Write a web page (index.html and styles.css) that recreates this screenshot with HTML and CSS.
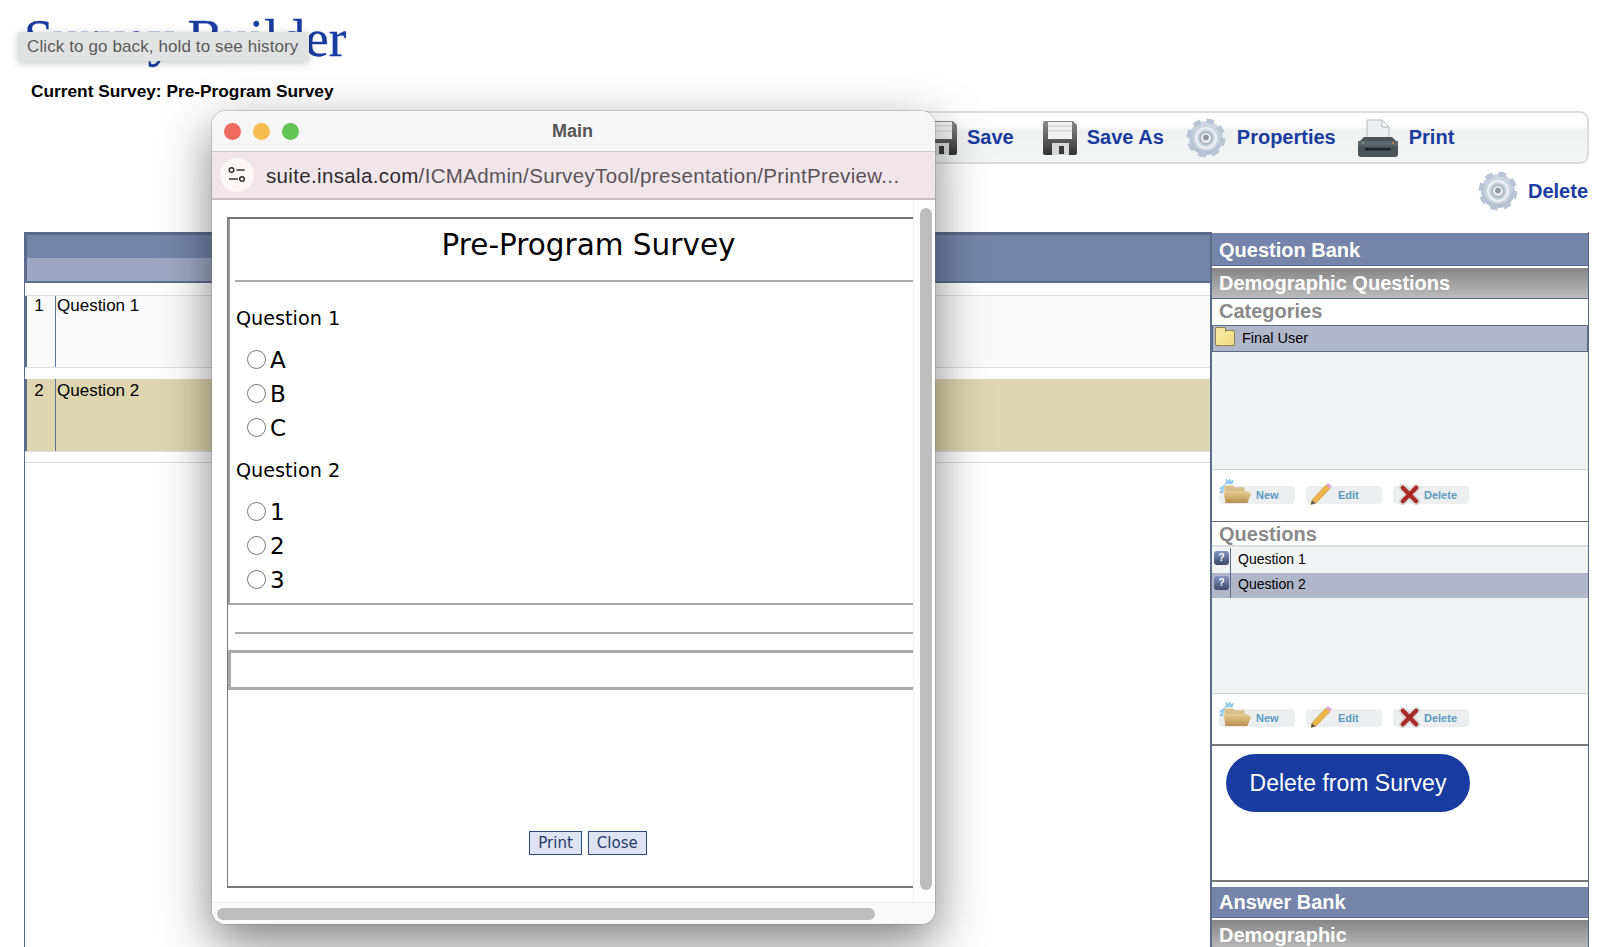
FILE: index.html
```html
<!DOCTYPE html>
<html lang="en">
<head>
<meta charset="utf-8">
<title>Survey Builder</title>
<link rel="stylesheet" href="styles.css">
</head>
<body>
<svg class="defs" width="0" height="0" aria-hidden="true">
  <defs>
    <linearGradient id="gearFill" x1="0" y1="0" x2="0" y2="1"><stop offset="0" stop-color="#d3d9e2"/><stop offset="1" stop-color="#aebbd2"/></linearGradient>
    <linearGradient id="floppyFill" x1="0" y1="0" x2="0" y2="1"><stop offset="0" stop-color="#8a8a8a"/><stop offset="1" stop-color="#333"/></linearGradient>
    <linearGradient id="tanFill" x1="0" y1="0" x2="0" y2="1"><stop offset="0" stop-color="#e8cf95"/><stop offset="1" stop-color="#b98f4e"/></linearGradient>
    <symbol id="gear" viewBox="0 0 40 40">
      <circle cx="20" cy="20" r="17" fill="url(#gearFill)" stroke="#b9c4d6" stroke-width="5" stroke-dasharray="7.500 5.850"/>
      <circle cx="20" cy="20" r="13" fill="#cdd5e0"/>
      <circle cx="20" cy="20" r="10" fill="none" stroke="#eef1f5" stroke-width="2"/>
      <circle cx="20" cy="20" r="6" fill="#e6e9ee" stroke="#a7acb3" stroke-width="1.500"/>
      <circle cx="20" cy="19.500" r="2.800" fill="#8f959d"/>
    </symbol>
    <symbol id="floppy" viewBox="0 0 36 36">
      <path d="M1 3a2 2 0 0 1 2-2h28l4 4v28a2 2 0 0 1-2 2H3a2 2 0 0 1-2-2z" fill="url(#floppyFill)"/>
      <rect x="6" y="2" width="24" height="17" fill="#f1f1f1"/>
      <rect x="6" y="5" width="24" height="1.500" fill="#d8d8d8"/>
      <rect x="6" y="10" width="24" height="1.500" fill="#d8d8d8"/>
      <rect x="10" y="23" width="17" height="12" fill="#d8d8d8"/>
      <rect x="17" y="26" width="5" height="8" fill="#3a3a3a"/>
    </symbol>
    <symbol id="printer" viewBox="0 0 40 40">
      <path d="M9 2h15l7 7v14H9z" fill="#eceef0" stroke="#b5bbc0"/>
      <path d="M24 2v7h7z" fill="#fff" stroke="#b5bbc0"/>
      <path d="M6 19h28l6 6v11a3 3 0 0 1-3 3H3a3 3 0 0 1-3-3V25z" fill="#4a5358"/>
      <rect x="0" y="23" width="40" height="5" fill="#5d666b"/>
      <rect x="7" y="30" width="26" height="2.500" fill="#1f2427"/>
      <circle cx="5" cy="25" r="1" fill="#5fb37a"/>
      <circle cx="35" cy="25" r="1" fill="#d98a3c"/>
    </symbol>
    <symbol id="folderNew" viewBox="0 0 36 28">
      <path d="M8 1l1.500 3 2.500-3 .5 3.500 3-2-1 3.500H8L3 10l-2 1 3 2-3 2.500 3.500.5" fill="#9fd0f0" stroke="#7fbfea" stroke-width="1"/>
      <path d="M6 8h9l2 2h11v5H6z" fill="#d7bf8a"/>
      <path d="M7 27l-2-13h25l5 3-4 10z" fill="url(#tanFill)"/>
    </symbol>
    <symbol id="pencil" viewBox="0 0 24 24">
      <path d="M3 19L17 4l4 3.500L7 22l-5 1.500z" fill="#eeb64a" stroke="#c99a3c" stroke-width=".7"/>
      <path d="M17 4l2-2 4 3.500-2 2z" fill="#e3a8d8"/>
      <path d="M2 23.500l1-4 3.500 2.800z" fill="#555"/>
    </symbol>
    <symbol id="cross" viewBox="0 0 22 22">
      <path d="M4 4l14 14M18 4L4 18" stroke="#d9d9d9" stroke-width="8" stroke-linecap="round"/>
      <path d="M4 4l14 14M18 4L4 18" stroke="#a92a26" stroke-width="4.500" stroke-linecap="round"/>
    </symbol>
  </defs>
</svg>

<div class="page">
  <header class="head">
    <h1 class="head-title">Survey Builder</h1>
    <p class="head-current">Current Survey: Pre-Program Survey</p>
  </header>

  <nav class="toolbar">
    <a class="tool tool-save"><svg class="ico ico-floppy"><use href="#floppy"/></svg>Save</a>
    <a class="tool tool-saveas"><svg class="ico ico-floppy"><use href="#floppy"/></svg>Save As</a>
    <a class="tool tool-props"><svg class="ico ico-gear"><use href="#gear"/></svg>Properties</a>
    <a class="tool tool-print"><svg class="ico ico-gear"><use href="#printer"/></svg>Print</a>
  </nav>
  <div class="subtools">
    <a class="tool tool-delete"><svg class="ico ico-gear"><use href="#gear"/></svg>Delete</a>
  </div>

  <main class="work">
    <section class="sheet">
      <div class="sheet-head"><div class="sheet-subhead"></div></div>
      <div class="q-row q-row-first"><span class="q-num">1</span><span class="q-text">Question 1</span></div>
      <div class="q-row q-row-active"><span class="q-num">2</span><span class="q-text">Question 2</span></div>
      <div class="sheet-rest"></div>
    </section>

    <aside class="bank">
      <h2 class="bank-head">Question Bank</h2>
      <h3 class="bank-sub">Demographic Questions</h3>
      <h4 class="bank-label">Categories</h4>
      <div class="list list-cat">
        <div class="cat-row"><span class="folder"></span>Final User</div>
      </div>
      <div class="mini-bar">
        <a class="mini mini-n"><svg class="mini-new"><use href="#folderNew"/></svg><span class="mini-label">New</span></a>
        <a class="mini mini-e"><svg class="mini-edit"><use href="#pencil"/></svg><span class="mini-label">Edit</span></a>
        <a class="mini mini-d"><svg class="mini-del"><use href="#cross"/></svg><span class="mini-label">Delete</span></a>
      </div>
      <h4 class="bank-label bank-label-q">Questions</h4>
      <div class="list list-q">
        <div class="item"><span class="item-icon"><span class="qmark">?</span></span><span class="item-text">Question 1</span></div>
        <div class="item item-active"><span class="item-icon"><span class="qmark">?</span></span><span class="item-text">Question 2</span></div>
      </div>
      <div class="mini-bar mini-bar-last">
        <a class="mini mini-n"><svg class="mini-new"><use href="#folderNew"/></svg><span class="mini-label">New</span></a>
        <a class="mini mini-e"><svg class="mini-edit"><use href="#pencil"/></svg><span class="mini-label">Edit</span></a>
        <a class="mini mini-d"><svg class="mini-del"><use href="#cross"/></svg><span class="mini-label">Delete</span></a>
      </div>
      <div class="action">
        <button class="action-btn" type="button">Delete from Survey</button>
      </div>
      <h2 class="bank-head bank-head-answer">Answer Bank</h2>
      <h3 class="bank-sub">Demographic</h3>
    </aside>
  </main>
</div>

<div class="tooltip">Click to go back, hold to see history</div>

<div class="window">
  <div class="win-title">
    <span class="light light-red"></span><span class="light light-yellow"></span><span class="light light-green"></span>
    <span class="win-name">Main</span>
  </div>
  <div class="win-url">
    <span class="url-badge">
      <svg width="20" height="20" viewBox="0 0 20 20" fill="none" stroke="#333" stroke-width="1.500">
        <circle cx="4.500" cy="5" r="2.300"/><path d="M9.500 5h8"/>
        <circle cx="15" cy="14" r="2.300"/><path d="M2 14h9"/>
      </svg>
    </span>
    <span class="url-text"><b class="url-host">suite.insala.com</b>/ICMAdmin/SurveyTool/presentation/PrintPreview...</span>
  </div>
  <div class="win-body">
    <div class="view">
      <div class="doc">
        <div class="doc-main">
          <div class="doc-title">Pre-Program Survey</div>
          <div class="doc-q">Question 1</div>
          <label class="opt"><input class="radio" type="radio" name="q1"><span class="opt-text">A</span></label>
          <label class="opt"><input class="radio" type="radio" name="q1"><span class="opt-text">B</span></label>
          <label class="opt"><input class="radio" type="radio" name="q1"><span class="opt-text">C</span></label>
          <div class="doc-q doc-q-next">Question 2</div>
          <label class="opt"><input class="radio" type="radio" name="q2"><span class="opt-text">1</span></label>
          <label class="opt"><input class="radio" type="radio" name="q2"><span class="opt-text">2</span></label>
          <label class="opt"><input class="radio" type="radio" name="q2"><span class="opt-text">3</span></label>
        </div>
        <hr class="doc-rule">
        <div class="doc-empty"></div>
        <div class="doc-btns">
          <button class="doc-btn" type="button">Print</button>
          <button class="doc-btn" type="button">Close</button>
        </div>
      </div>
    </div>
    <div class="vtrack"><div class="vthumb"></div></div>
    <div class="htrack"><div class="hthumb"></div></div>
  </div>
</div>
</body>
</html>
```
FILE: styles.css
```css
* { box-sizing: border-box; }
html, body { margin: 0; height: 100%; overflow: hidden; background: #fff; }
body { font-family: "Liberation Sans", Arial, sans-serif; color: #000; position: relative; }
.defs { position: absolute; }
.page { height: 947px; display: flex; flex-direction: column; padding: 0 11px 0 24px; }

/* header */
.head { height: 111px; flex: none; }
.head-title { margin: 0; padding-top: 6px; height: 81px; font: 400 53px/65px "Liberation Serif", serif; -webkit-text-stroke: .3px #183c9f; color: #183c9f; white-space: nowrap; }
.head-current { margin: 0; padding-left: 7px; font-weight: 700; font-size: 17.300px; line-height: 20px; }

/* toolbar */
.toolbar { flex: none; height: 53px; margin-left: 626px; padding-left: 270px; display: flex; align-items: center; border: 2px solid #dcdcdc; border-radius: 9px; background: linear-gradient(#fff 0, #fcfcfc 30%, #eff0f0 34%, #f4f5f5 100%); }
.tool { display: flex; align-items: center; font-weight: 700; font-size: 20px; color: #183c9f; white-space: nowrap; }
.ico { flex: none; filter: blur(.7px); }
.ico-floppy { width: 36px; height: 36px; }
.ico-gear { width: 40px; height: 40px; }
.tool-save .ico { margin-right: 9px; }
.tool-saveas { margin-left: 28px; }
.tool-saveas .ico { margin-right: 9px; }
.tool-props { margin-left: 22px; }
.tool-props .ico { margin-right: 11px; }
.tool-print { margin-left: 22px; }
.tool-print .ico { margin-right: 11px; }
.subtools { flex: none; height: 68px; display: flex; justify-content: flex-end; align-items: center; padding: 0 1px 14px 0; }
.tool-delete .ico { margin-right: 10px; }

/* main work area */
.work { flex: 1; min-height: 0; display: flex; }
.sheet { width: 1186px; flex: none; border-left: 1px solid #5b6b8a; }
.sheet-head { height: 51px; border-top: 3px solid #5b6b8a; border-left: 2px solid #5b6b8a; border-bottom: 2px solid #5b6b8a; background: #7485a9; }
.sheet-subhead { width: 400px; height: 23px; margin-top: 23px; background: #9da8c2; }
.q-row { height: 73px; margin-top: 11px; padding-top: 2px; display: flex; background: #fafafa; border-bottom: 1px solid #ddd; font-size: 17px; line-height: 20px; }
.q-row-first { margin-top: 12px; padding-top: 0; border-top: 1px solid #ddd; }
.q-row-active { background: #ded6b0; }
.q-num { width: 31px; margin-top: -2px; padding-top: 2px; text-align: center; flex: none; border-left: 2px solid #5b6b8a; border-right: 1px solid #5b7299; padding-right: 4px; }
.q-row-first .q-num { margin-top: 0; padding-top: 0; }
.q-text { padding-left: 1px; flex: 1; }
.sheet-rest { height: 0; margin-top: 10px; border-top: 1px solid #ddd; }

/* right bank */
.bank { width: 379px; flex: none; padding-top: 1px; border-left: 2px solid #5b6b8a; border-right: 1px solid #5b6b8a; display: flex; flex-direction: column; background: #fff; overflow: hidden; }
.bank-head { flex: none; margin: 0; height: 33px; padding-left: 7px; background: #7485a9; color: #fff; font-size: 20px; line-height: 34px; border-bottom: 1px solid #5b6b8a; }
.bank-sub { flex: none; margin: 2px 0 0; height: 31px; padding-left: 7px; background: linear-gradient(#858585, #bcbcbc); color: #fff; font-size: 20px; line-height: 31px; border-bottom: 1px solid #5b6b8a; }
.bank-label { flex: none; margin: 0; height: 24px; padding-left: 7px; color: #8a8a8a; font-size: 20px; line-height: 24px; }
.bank-label-q { height: 25px; border-bottom: 2px solid #ddd; }
.list { flex: none; background: #f2f3f4; border-bottom: 1px solid #ccc; }
.list-cat { margin-top: 2px; height: 145px; }
.list-q { height: 147px; padding-top: 1px; }
.cat-row { height: 27px; display: flex; align-items: center; background: #b1b6ca; border: 1.500px solid #5b6b8a; font-size: 14.500px; padding: 0 0 1px 2px; }
.folder { width: 20px; height: 16px; margin-right: 7px; background: linear-gradient(135deg, #f9ecaa, #eedc80); border: 1px solid #8d8450; border-radius: 2px; position: relative; }
.folder::before { content: ""; position: absolute; left: -1px; top: -4px; width: 9px; height: 4px; background: #f5e89e; border: 1px solid #8d8450; border-bottom: 0; border-radius: 2px 2px 0 0; }
.item { height: 25px; display: flex; align-items: stretch; font-size: 14px; line-height: 23px; }
.item-active { background: #b1b6ca; }
.item-icon { width: 19px; flex: none; padding-left: 2px; padding-top: 3px; border-right: 1.500px solid #5b6b8a; }
.qmark { display: block; width: 15px; height: 14px; border-radius: 3px; background: linear-gradient(#8497bf, #3b4a6b); color: #fff; font-size: 10px; line-height: 14px; font-weight: 700; text-align: center; }
.item-text { padding-left: 7px; }
.mini-bar { flex: none; height: 52px; display: flex; gap: 11px; padding: 16px 0 0 7px; border-bottom: 1px solid #667; }
.mini-bar-last { padding-top: 15px; border-bottom: 2px solid #777; }
.mini { position: relative; width: 76px; height: 18px; display: flex; align-items: center; background: #eceef0; border-radius: 4px; }
.mini-n { padding-left: 37px; }
.mini-e { padding-left: 32px; }
.mini-d { padding-left: 31px; }
.mini-label { font-size: 11px; font-weight: 700; color: #5b9cbf; }
.mini svg { position: absolute; filter: blur(.3px); }
.mini-new { left: 0; bottom: 0; width: 33px; height: 26px; }
.mini-edit { left: 3px; bottom: -1px; width: 24px; height: 24px; }
.mini-del { left: 6px; bottom: -1px; width: 21px; height: 21px; }
.action { flex: none; height: 136px; padding: 8px 0 0 14px; border-bottom: 2px solid #777; }
.action-btn { width: 244px; height: 58px; border: 0; border-radius: 29px; background: #183c9f; color: #fff; font: 400 23px "Liberation Sans", Arial, sans-serif; }
.bank-head-answer { margin-top: 5px; height: 31px; line-height: 31px; }

/* tooltip */
.tooltip { position: absolute; left: 18px; top: 32px; width: 291px; height: 29px; padding-left: 9px; background: #e1e3e3; color: #5a5a5a; font-size: 17px; line-height: 29px; letter-spacing: .11px; white-space: nowrap; box-shadow: 0 2px 8px rgba(0,0,0,.22); border-radius: 2px; }

/* popup window */
.window { position: absolute; left: 212px; top: 111px; width: 723px; height: 813px; display: flex; flex-direction: column; border-radius: 14px; overflow: hidden; background: #fff; }
.window { box-shadow: 0 0 0 1px rgba(120,120,120,.3), 0 18px 50px rgba(0,0,0,.5); }
.win-title { flex: none; height: 41px; display: flex; align-items: center; padding-left: 12px; gap: 12px; background: #f6f6f6; border-bottom: 1px solid #cfc8cb; position: relative; }
.light { width: 17px; height: 17px; border-radius: 50%; }
.light-red { background: #ee6a5f; }
.light-yellow { background: #f5bd4f; }
.light-green { background: #61c454; }
.win-name { position: absolute; left: 0; right: 2px; text-align: center; font-weight: 700; font-size: 18px; color: #555; }
.win-url { flex: none; height: 48px; display: flex; align-items: center; padding-left: 8px; background: #f0e6ea; border-bottom: 2px solid #c9bfc3; }
.url-badge { width: 34px; height: 34px; margin-right: 12px; border-radius: 50%; background: #fdf8f6; display: flex; align-items: center; justify-content: center; }
.url-text { padding-top: 2px; font-size: 20.500px; color: #5a5357; white-space: nowrap; letter-spacing: .35px; }
.url-host { font-weight: 400; color: #2f2a2d; }
.win-body { flex: 1; min-height: 0; display: grid; grid-template-columns: 701px 22px; grid-template-rows: 1fr 22px; }
.view { overflow: hidden; padding: 17px 0 0 15px; }
.doc { width: 722px; height: 671px; display: flex; flex-direction: column; border: 1px solid #777; border-top: 2px solid #777; border-bottom: 2px solid #777; font-family: "DejaVu Sans", Verdana, sans-serif; }
.doc-main { flex: none; height: 386px; padding-left: 6px; border-left: 2px solid #999; border-bottom: 2px solid #aaa; }
.doc-title { height: 63px; padding: 7px 6px 0 0; text-align: center; font-size: 29.500px; line-height: 38px; border-bottom: 2px solid #aaa; margin-left: -1px; }
.doc-q { height: 36px; margin-top: 18px; font-size: 19.200px; line-height: 38px; }
.doc-q-next { margin-top: 8px; }
.opt { display: flex; align-items: center; height: 34px; padding-left: 11px; font-size: 23px; }
.opt-text { padding-top: 2px; margin-left: -1px; }
.doc-q + .opt { margin-top: 6px; }
.radio { appearance: none; width: 19px; height: 19px; margin: 0 5px 0 0; border: 1px solid #777; border-radius: 50%; background: #fff; }
.doc-rule { flex: none; width: auto; margin: 27px 0 0 7px; border: 0; border-top: 2px solid #aaa; }
.doc-empty { flex: none; height: 40px; margin-top: 16px; border: 3px solid #aaa; border-right: 0; }
.doc-btns { flex: none; display: flex; justify-content: center; gap: 6px; margin-top: 141px; }
.doc-btn { height: 24px; padding: 0 8px; background: #dde3f2; border: 1.500px solid #2a4a7a; color: #1f3a66; font: 400 15px "DejaVu Sans", Verdana, sans-serif; }
.vtrack { border-left: 1px solid #eee; padding: 8px 4px 0 6px; background: #fff; }
.vthumb { width: 12px; height: 682px; border-radius: 6px; background: #bdbdbd; }
.htrack { grid-column: 1 / 3; border-top: 1px solid #eee; padding: 5px 0 0 5px; background: #fafafa; }
.hthumb { width: 658px; height: 12px; border-radius: 6px; background: #bdbdbd; }
```
